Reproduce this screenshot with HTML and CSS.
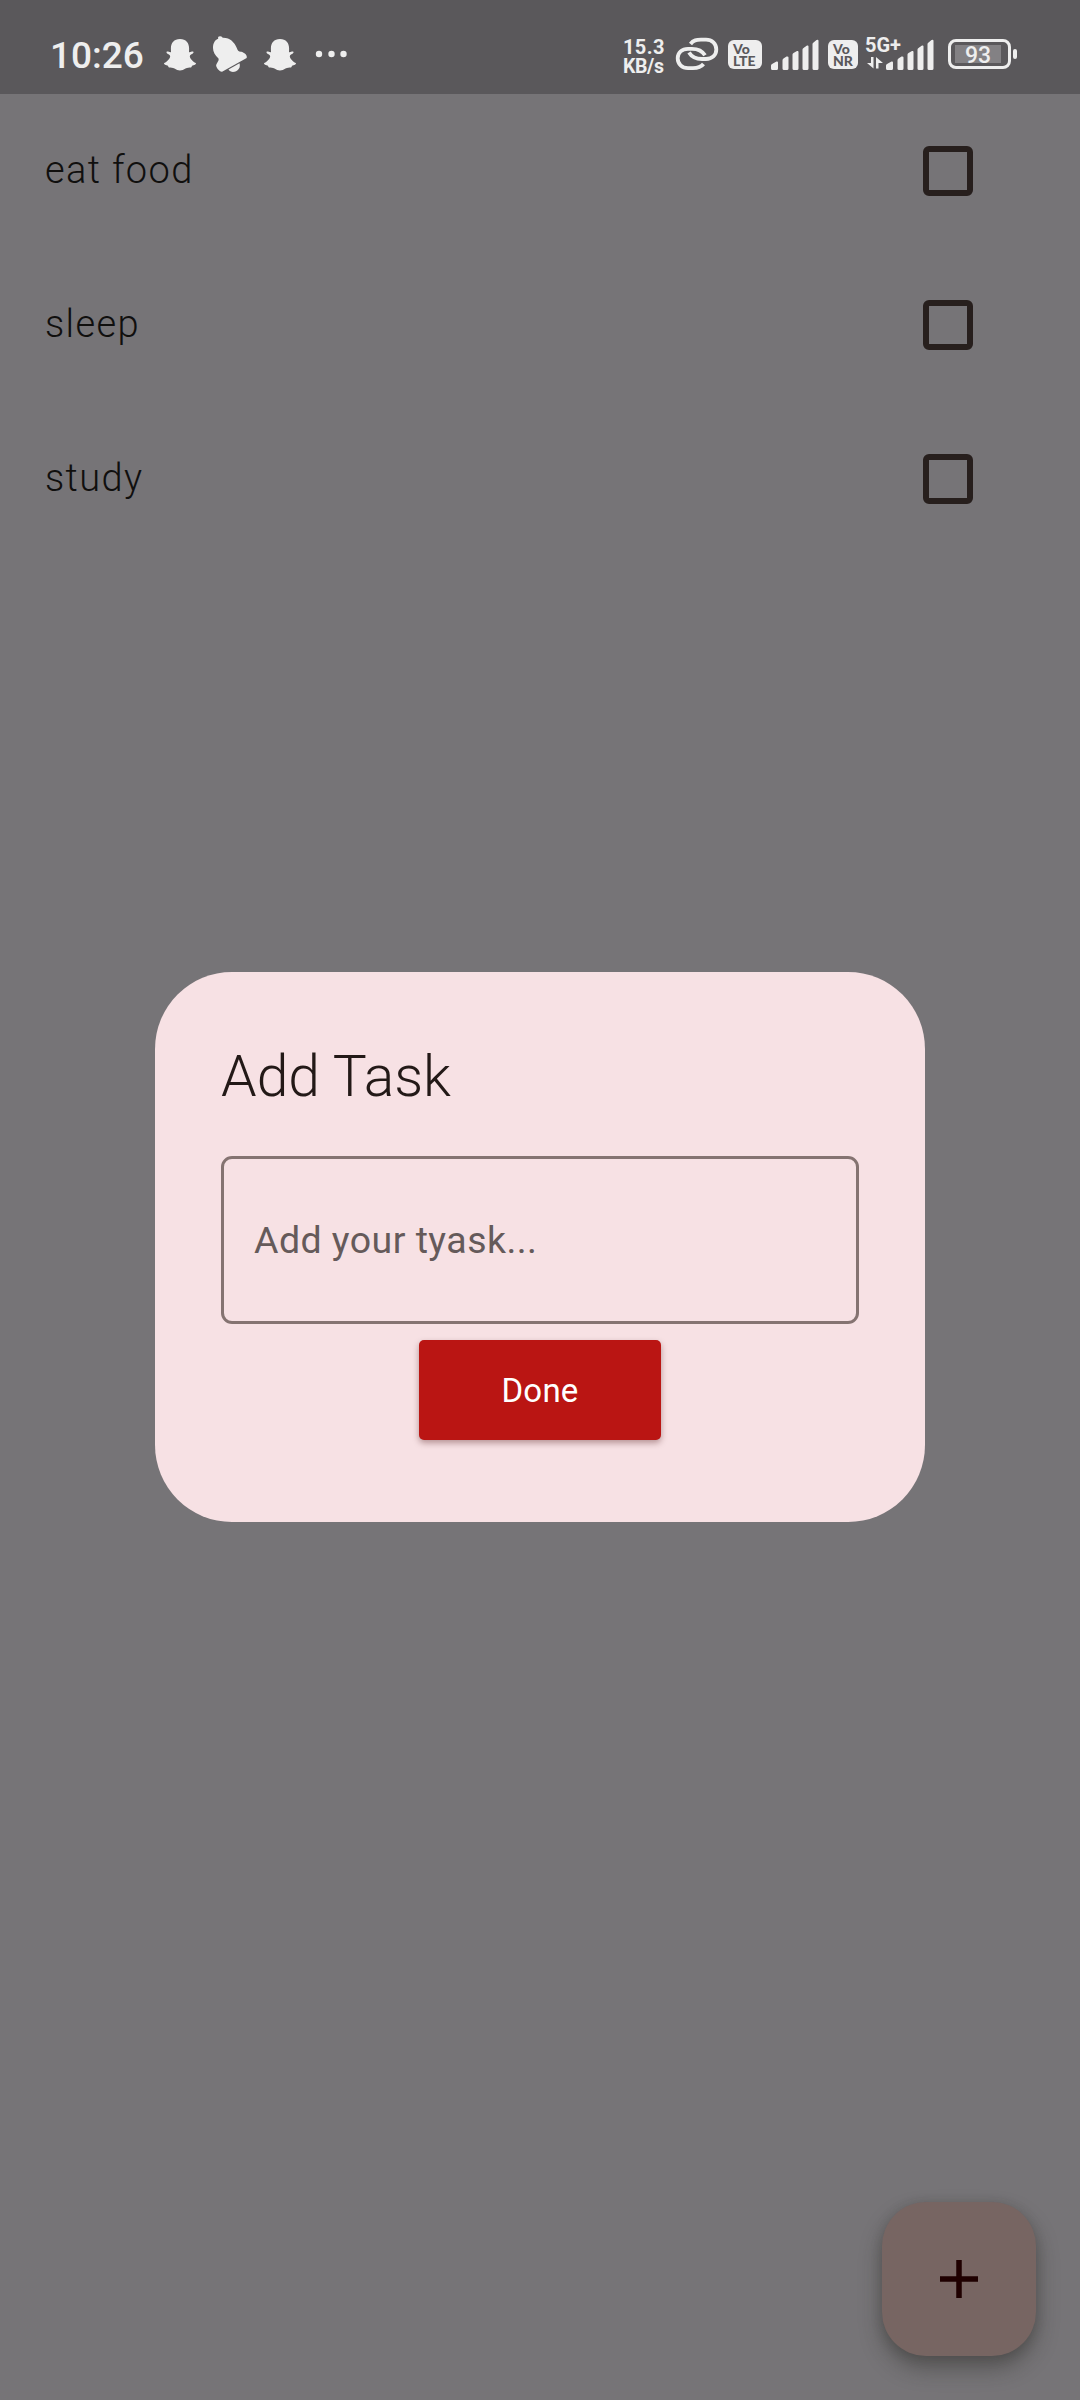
FILE: index.html
```html
<!DOCTYPE html>
<html lang="en">
<head>
<meta charset="utf-8">
<title>Tasks</title>
<link rel="stylesheet" href="styles.css">
</head>
<body>
<div class="screen">
  <header class="status">
    <span class="clock">10:26</span>
    <svg class="left-icons" width="190" height="40" viewBox="0 0 190 40">
      <defs>
        <path id="ghost" d="M17.500 3C11.500 3 8.300 7 8.400 12.500L8.500 16C7 16.800 5 14.500 4 16C3.500 17.500 7 18.300 7.600 19.800C8.200 22 4.500 26 1.800 27C.8 27.700 2 29 5 29.600C6 30 5.600 31.200 6.500 31.400C8.500 31.600 10 31.200 12 32.500C15.500 35 19.500 35 23 32.500C25 31.200 26.500 31.600 28.500 31.400C29.400 31.200 29 30 30 29.600C33 29 34.200 27.700 33.200 27C30.500 26 26.800 22 27.400 19.800C28 18.300 31.500 17.500 31 16C30 14.500 28 16.800 26.500 16L26.600 12.500C26.700 7 23.500 3 17.500 3Z"/>
      </defs>
      <g fill="#eee">
        <use href="#ghost" x="-.5"/>
        <use href="#ghost" x="99.500"/>
        <path d="M50 12C50 7 52 4 55.200 2.800C54.500 .8 56 .1 57.300 .3C58.600 .5 59.400 1.200 59.600 1.800C67 1.500 71.500 6.500 73.800 12C74.600 14.500 75.500 16 78.500 15.800C82 17 84.500 19.500 83.700 22L59.500 35.500C57.500 36.500 54 33 53.200 30C52.800 27.500 56.500 25 55.500 22.500C52 19 50 16 50 12Z"/>
        <path d="M65.500 33.500L76.500 27.300C77.800 31 75.500 34.800 71.700 35.800C69 36.300 66.500 35.500 65.500 33.500Z"/>
        <circle cx="156" cy="18" r="3.200"/><circle cx="168.500" cy="18" r="3.200"/><circle cx="180.500" cy="18" r="3.200"/>
      </g>
    </svg>
    <div class="rate"><span>15.3</span><span class="unit">KB/s</span></div>
    <svg class="link" width="44" height="34" viewBox="0 0 44 34" fill="none" stroke="#eee" stroke-width="3.800">
      <path d="M15.500 7C18.500 3 21.500 2.700 26 2.700H31C37 2.700 41.300 6.800 41.300 12.500S37 22 31 22H27C21 22 17 20.500 14 15.500"/>
      <path d="M28.500 27C25.500 30.800 22.500 31.100 18 31.100H13C7 31.100 2.700 27 2.700 21.300S7 11.800 13 11.800H17C23 11.800 27 13.300 30 18.300"/>
    </svg>
    <div class="chip lte"><span>Vo</span><span>LTE</span></div>
    <svg class="bars" width="48" height="32" viewBox="0 0 48 32">
      <path id="bars" fill="#eee" d="M0 26.500Q0 25.500 1 25L5.500 22.500Q7 22 7 23.500V29.500Q7 31 5.500 31H1.500Q0 31 0 29.500ZM11.500 21.500Q11.500 20 12.500 19.500L15.500 17.500Q17.500 17 17.500 18.500V29.500Q17.500 31 16 31H13Q11.500 31 11.500 29.500ZM21.500 15.500Q21.500 14.500 22.500 14L26 12Q27.500 11.500 27.500 13V29.500Q27.500 31 26 31H23Q21.500 31 21.500 29.500ZM31.500 10.500Q31.500 9.500 32.500 9L36 6.500Q37.500 6 37.500 7.500V29.500Q37.500 31 36 31H33Q31.500 31 31.500 29.500ZM41.500 5Q41.500 4 42.500 3.500L45.500 1Q47.500 0 47.500 2V29.500Q47.500 31 46 31H43Q41.500 31 41.500 29.500Z"/>
    </svg>
    <div class="chip nr"><span>Vo</span><span>NR</span></div>
    <div class="five">
      <span class="five-label">5G+</span>
      <svg class="arrows" width="16" height="12" viewBox="0 0 16 12" fill="#eee"><path d="M4 0H6.500V11.500L0 6H4ZM9 11.500V0L16 6H11.500V11.500Z"/></svg>
      <svg class="five-bars" width="48" height="32" viewBox="0 0 48 32"><use href="#bars"/></svg>
    </div>
    <div class="battery"><span class="level">93</span></div>
  </header>

  <main class="tasks">
    <div class="task"><span class="name">eat food</span><i class="box"></i></div>
    <div class="task"><span class="name">sleep</span><i class="box"></i></div>
    <div class="task"><span class="name">study</span><i class="box"></i></div>
  </main>

  <button class="fab" aria-label="Add"><svg width="38" height="38" viewBox="0 0 38 38"><path d="M0 19H38M19 0V38" stroke="#1f0000" stroke-width="5.500"/></svg></button>

  <section class="dialog">
    <h1>Add Task</h1>
    <div class="field">Add your tyask...</div>
    <button class="done">Done</button>
  </section>
</div>
</body>
</html>
```
FILE: styles.css
```css
* { box-sizing: border-box; }
body { margin: 0; font-family: Roboto, sans-serif; }
.screen { position: relative; width: 1080px; height: 2400px; background: #767477; overflow: hidden; }

.status { height: 94px; background: #5a585b; color: #eee; display: flex; align-items: flex-start; padding-left: 50px; }
.clock { width: 113px; padding-top: 34px; font-size: 37px; line-height: 44px; font-weight: 500; white-space: nowrap; }
.left-icons { margin-top: 36px; flex: none; }
.rate { width: 54px; margin: 38px 0 0 270px; display: flex; flex-direction: column; font-size: 20px; line-height: 19px; font-weight: 700; white-space: nowrap; letter-spacing: .4px; }
.unit { font-size: 19.500px; letter-spacing: -.4px; }
.link { margin: 37px 0 0 -2px; flex: none; }
.chip { height: 29px; margin-top: 40px; border-radius: 6px; background: #eee; color: #5a585b; display: flex; flex-direction: column; padding: 3px 0 0 5px; font: 900 14px/12px Lato, sans-serif; flex: none; }
.lte { width: 34px; margin-left: 9px; }
.nr { width: 30px; margin-left: 9px; }
.bars { margin: 39px 0 0 9px; flex: none; }
.five { width: 69px; height: 32px; margin: 39px 0 0 7px; display: grid; grid-template-columns: 21px 48px; grid-template-rows: 32px; align-items: end; flex: none; }
.five > * { grid-row: 1; }
.five-label { grid-column: 1 / 3; align-self: start; margin-top: -5px; font-size: 20px; line-height: 22px; font-weight: 700; }
.arrows { grid-column: 1; margin: 0 0 2px 2px; }
.five-bars { grid-column: 2; }
.battery { position: relative; width: 63px; height: 30px; margin: 39px 0 0 14px; border: 3px solid #eee; border-radius: 8px; padding: 3px 7px 3px 4px; flex: none; }
.battery::after { content: ""; position: absolute; left: 62px; top: 7px; width: 4px; height: 10px; border-radius: 2px; background: #eee; }
.level { display: block; height: 18px; background: #838184; text-align: center; font-size: 23px; line-height: 21px; font-weight: 500; }

.tasks { display: flex; flex-direction: column; }
.task { height: 154px; padding: 0 107px 0 45px; display: flex; align-items: center; justify-content: space-between; font-size: 38px; font-weight: 300; letter-spacing: 1.350px; color: #100f0e; }
.name { padding-bottom: 2px; }
.box { width: 50px; height: 50px; border: 6px solid #271f1d; border-radius: 6px; }

.fab { position: absolute; left: 882px; top: 2202px; width: 154px; height: 154px; border: 0; border-radius: 44px; background: #776562; padding: 0; display: grid; place-items: center; box-shadow: 0 12px 22px rgba(40,40,35,.42), 0 2px 12px rgba(40,40,35,.2); }

.dialog { position: absolute; left: 155px; top: 972px; width: 770px; height: 550px; padding: 66px; border-radius: 77px; background: #f7e1e4; display: flex; flex-direction: column; align-items: center; }
.dialog h1 { align-self: stretch; margin: 0; height: 118px; font-size: 57px; line-height: 78px; font-weight: 300; color: #231917; }
.field { width: 638px; height: 168px; border: 3px solid #857371; border-radius: 11px; padding-left: 30px; display: flex; align-items: center; font-size: 37.500px; letter-spacing: .45px; color: #655a5a; }
.done { margin-top: 16px; width: 242px; height: 100px; flex: none; border: 0; border-radius: 5px; background: #ba1513; color: #fff; padding: 2px 0 0; font: 400 33px/38px Roboto, sans-serif; letter-spacing: .2px; box-shadow: 0 3px 6px rgba(60,0,0,.35); }
```
